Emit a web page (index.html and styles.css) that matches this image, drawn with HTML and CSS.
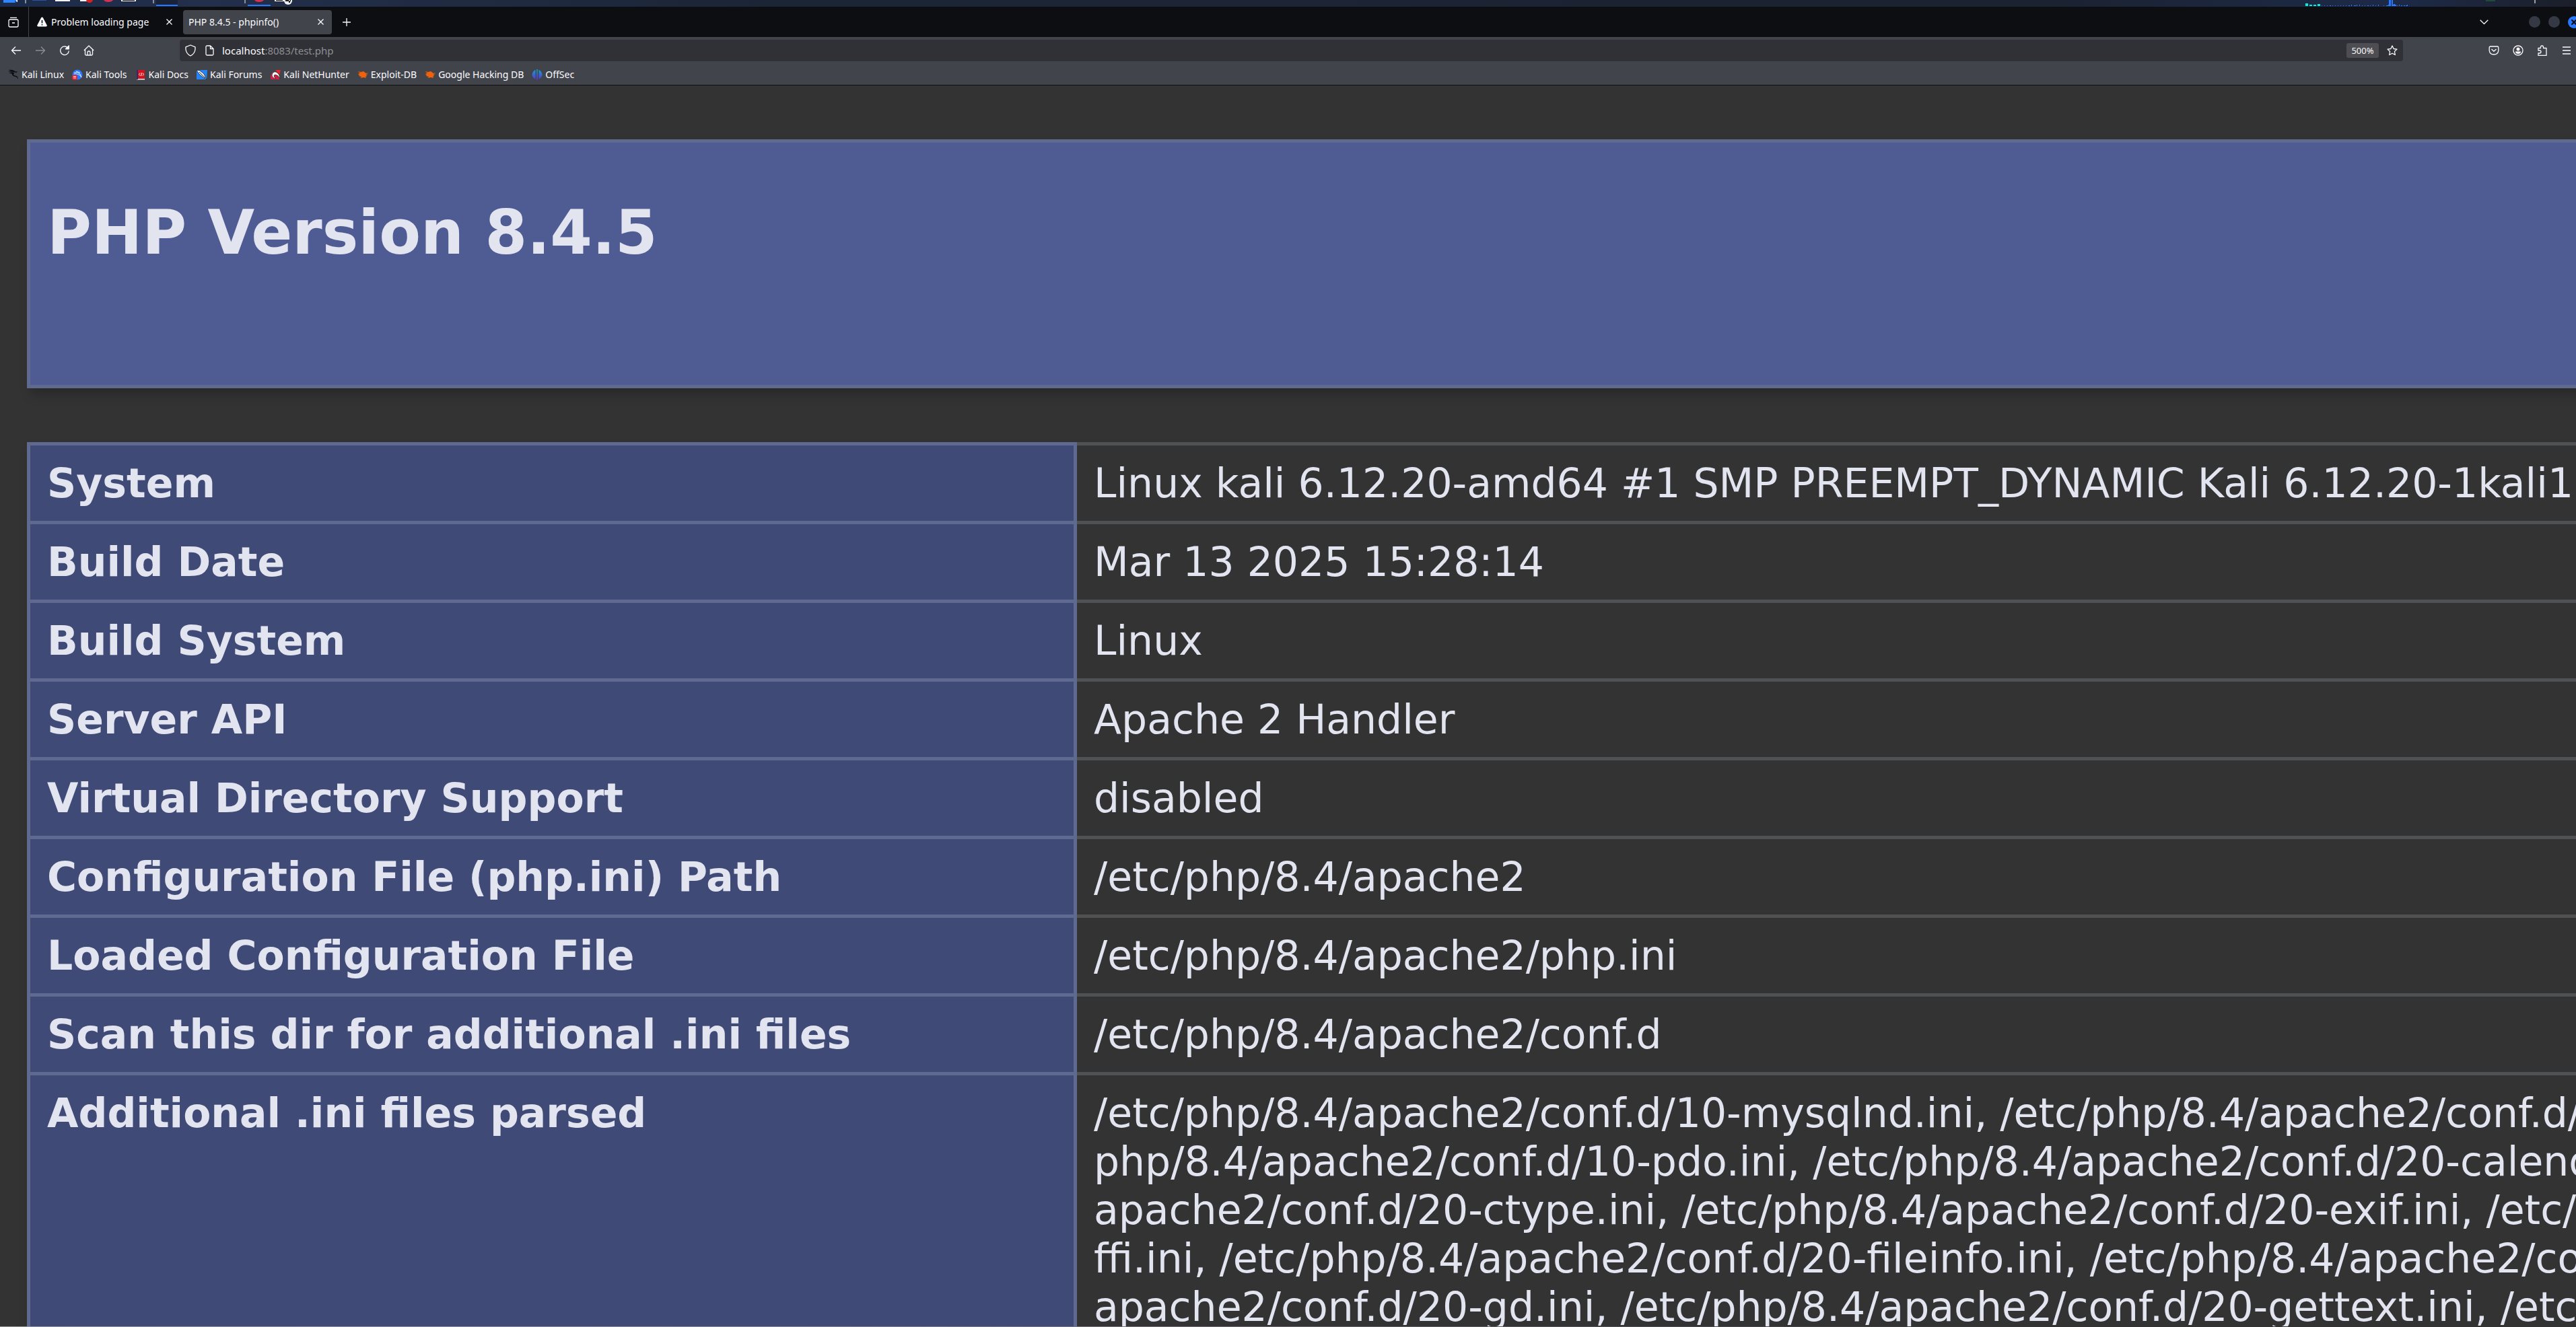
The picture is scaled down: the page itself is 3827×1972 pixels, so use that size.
FILE: index.html
```html
<!DOCTYPE html>
<html lang="en">
<head>
<meta charset="utf-8">
<title>PHP 8.4.5 - phpinfo()</title>
<link rel="stylesheet" href="styles.css">
</head>
<body>
<div class="panel" aria-hidden="true">
  <svg width="440" height="10" viewBox="0 0 440 10">
    <path d="M5 0h20v3l-3-2 1 3H5z" fill="#2f86ff"/>
    <path d="M24 0h2v3h-1z" fill="#fff"/>
    <path d="M37 0h2v5h-2zM227 0h2v5h-2zM363 0h2v5h-2z" fill="#8b8f98"/>
    <path d="M48 0h21v1H48z" fill="#2f4fa5"/>
    <path d="M82 0h22v2H82z" fill="#f2f2f2"/>
    <path d="M119 0h14v2h-14z" fill="#f2f2f2"/>
    <path d="M128 0h10q-1 4-5 4t-5-4z" fill="#d92020"/>
    <path d="M154 0h14q-2 3-7 3t-7-3zM378 0h14q-2 3-7 3t-7-3z" fill="#d9304f"/>
    <path d="M180 0h22v2h-22zM408 0h14v2h-14z" fill="#f4f4f4"/>
    <path d="M182 0h18v1h-18zM410 0h10v1h-10z" fill="#111"/>
    <path d="M232 0h32v7h-32z" fill="#1b2338"/>
    <path d="M232 7h32v2h-32zM368 7h34v2h-34z" fill="#2777ff"/>
    <circle cx="428" cy="1" r="6" fill="#eee"/>
    <path d="M424 0v2h5v2h2V2h1V0h-1v1h-2V0z" fill="#222"/>
  </svg>
  <svg width="402" height="10" viewBox="0 0 402 10">
    <path d="M0 5h4v4H0zM6 7h4v2H6zM12 7h4v2h-4zM18 6h4v3h-4z" fill="#00f0d8"/>
    <path d="M24 8h1v1h-1zM28 8h1v1h-1zM32 8h1v1h-1zM36 8h2v1h-2zM40 8h1v1h-1zM44 8h1v1h-1zM48 8h1v1h-1zM52 8h1v1h-1zM56 8h1v1h-1zM60 8h1v1h-1zM64 8h2v1h-2zM68 7h1v2h-1zM72 8h3v1h-3zM76 7h1v2h-1zM80 7h1v2h-1zM84 8h1v1h-1zM88 8h1v1h-1zM92 8h2v1h-2zM96 8h1v1h-1zM100 7h1v2h-1zM104 8h1v1h-1zM108 7h1v2h-1zM116 8h1v1h-1zM120 8h3V7h1V0h3v9h-7zM128 0h2v7h1V6h2v1h2v2h-7zM136 8h1v1h-1zM139 7h1v2h-1zM142 8h2v1h-2zM146 8h2v1h-2zM149 8h2V7h1v2h-3z" fill="#2777ff"/>
    <path d="M268 0h14v2h-14z" fill="#1f4a3c"/>
    <path d="M340 0h2v5h-2z" fill="#9a9da5"/>
  </svg>
</div>

<header class="browser">
  <div class="tabbar">
    <button class="icon-btn recent" aria-label="Firefox View">
      <svg width="16" height="16" viewBox="0 0 16 16" class="line"><path d="M3 1.3h10M1 7V6q0-2 2-2h10q2 0 2 2v1M1 7v6q0 2 2 2h10q2 0 2-2V6M6 9h4"/></svg>
    </button>
    <div class="tab">
      <svg width="15" height="15" viewBox="0 0 15 15"><path d="M7.500.500q1 0 1.500 1l5.600 10.700q.800 2-1.200 2.300H1.600q-2-.300-1.200-2.300L6 1.500q.500-1 1.500-1z" fill="#fbfbfe"/><path d="M7.500 5v4.500M7.500 11v1.500" stroke="#111" stroke-width="1.600"/></svg>
      <span class="tab-label">Problem loading page</span>
      <button class="icon-btn" aria-label="Close tab"><svg width="9" height="9" viewBox="0 0 9 9" class="line"><path d="M.5.5l8 8M8.500.500l-8 8"/></svg></button>
    </div>
    <div class="tab active">
      <span class="tab-label">PHP 8.4.5 - phpinfo()</span>
      <button class="icon-btn" aria-label="Close tab"><svg width="9" height="9" viewBox="0 0 9 9" class="line"><path d="M.5.5l8 8M8.500.500l-8 8"/></svg></button>
    </div>
    <button class="icon-btn new-tab" aria-label="New tab"><svg width="12" height="12" viewBox="0 0 12 12" class="line"><path d="M6 0v12M0 6h12"/></svg></button>
    <div class="window-controls">
      <button class="icon-btn all-tabs" aria-label="List all tabs"><svg width="13" height="8" viewBox="0 0 13 8" class="line"><path d="M.7.8l5.800 5.700L12.300.800"/></svg></button>
      <button class="dot" aria-label="Minimize"></button>
      <button class="dot" aria-label="Restore"></button>
      <button class="dot close" aria-label="Close"><svg width="8" height="8" viewBox="0 0 8 8"><path d="M1 1l6 6M7 1L1 7" stroke="#0c0e12" stroke-width="2.200" stroke-linecap="square"/></svg></button>
    </div>
  </div>

  <div class="navbar">
    <nav class="nav-buttons" aria-label="Navigation">
      <button class="icon-btn" aria-label="Back"><svg width="16" height="16" viewBox="0 0 16 16" class="line"><path d="M15 8H1.500M7 2.500L1.500 8 7 13.500"/></svg></button>
      <button class="icon-btn" aria-label="Forward" disabled><svg width="16" height="16" viewBox="0 0 16 16" class="line"><path d="M1 8h13.500M9 2.500L14.500 8 9 13.500"/></svg></button>
      <button class="icon-btn" aria-label="Reload"><svg width="16" height="16" viewBox="0 0 16 16" class="line"><path d="M13.500 5.200A6.300 6.300 0 1 0 14.300 8.500M14.300 1v4.800H9.500z"/><path d="M14.500 1v5h-5z" fill="#fbfbfe" stroke="none"/></svg></button>
      <button class="icon-btn" aria-label="Home"><svg width="16" height="16" viewBox="0 0 16 16" class="line"><path d="M.8 8L8 1l7.200 7M2.500 7v6.500q0 1.500 1.500 1.500h8q1.500 0 1.500-1.500V7M6 15v-4q0-2 2-2t2 2v4"/></svg></button>
    </nav>
    <div class="urlbar">
      <svg width="16" height="18" viewBox="0 0 16 18" class="line"><path d="M8 1L15 3.800v3.400Q14.500 13.500 8 17 1.500 13.500 1 7.200V3.800z"/></svg>
      <svg width="13" height="16" viewBox="0 0 13 16" class="line"><path d="M7.500 1H2.500Q1 1 1 2.500v11Q1 15 2.500 15h8q1.500 0 1.500-1.500v-8zM7.500 1v4.500H12"/></svg>
      <a class="url" href="#"><span class="host">localhost</span>:8083/test.php</a>
      <button class="zoom-level">500%</button>
      <button class="icon-btn" aria-label="Bookmark this page"><svg width="16" height="16" viewBox="0 0 16 16" class="line"><path d="M8 1l2.100 4.500 4.900.600-3.600 3.400.900 5L8 12.200l-4.300 2.300.900-5L1 6.100l4.900-.600z"/></svg></button>
    </div>
    <div class="tools">
      <button class="icon-btn" aria-label="Pocket"><svg width="16" height="16" viewBox="0 0 16 16" class="line"><path d="M3 2h10q1.800 0 1.800 1.800V8q-.5 6-6.800 6T1.200 8V3.800Q1.200 2 3 2zM4.500 6L8 9.300 11.500 6"/></svg></button>
      <button class="icon-btn" aria-label="Account"><svg width="16" height="16" viewBox="0 0 16 16" class="line"><circle cx="8" cy="8" r="7"/><circle cx="8" cy="6" r="2.500" fill="#fbfbfe" stroke="none"/><path d="M4 9.500h8q0 3.500-4 3.500t-4-3.500z" fill="#fbfbfe" stroke="none"/></svg></button>
      <button class="icon-btn" aria-label="Extensions"><svg width="16" height="16" viewBox="0 0 16 16" class="line"><path d="M5.500 4.500V3q0-2 2-2t2 2v1.500H14v11H2V12h2q2 0 2-2T4 8H2V4.500z"/></svg></button>
      <button class="icon-btn" aria-label="Menu"><svg width="16" height="16" viewBox="0 0 16 16" class="line"><path d="M2 3h12M2 8h12M2 13h12"/></svg></button>
    </div>
  </div>

  <nav class="bookmarks" aria-label="Bookmarks">
    <a href="#"><svg width="16" height="16" viewBox="0 0 16 16"><path d="M0 1q5-1 9 1l4 3-4-1Q4 3 0 4l4-2zM1 6q4-3 8-1 1 1-1 2 0 2 3 2.500 4 .500 4 6-1-4-4-4.500-5-1-5-4Q3 5 1 6zM9 4l5-1-2 2z" fill="#0b0c0f"/></svg>Kali Linux</a>
    <a href="#"><svg width="16" height="16" viewBox="0 0 16 16"><circle cx="8" cy="8" r="7.500" fill="#2777ff"/><path d="M3 5q5-2 9 2l2 5q-2-4-5-4.500Q6 6 3 7M6 3l6 2" stroke="#d9e8ff" fill="none"/><circle cx="4" cy="12" r="4" fill="#e8242c"/><path d="M2 10.500h4M3 11v3M5 11v3" stroke="#fff" stroke-width=".8"/></svg>Kali Tools</a>
    <a href="#"><svg width="16" height="16" viewBox="0 0 16 16"><path d="M2 1h12v13H2z" fill="#d8101c"/><path d="M2 14h12v1.500H2z" fill="#eee"/><path d="M2 1h2v14H2z" fill="#302a6b"/><path d="M7 5.500L5.500 7.500 7 9.500M11 5.500l1.500 2L11 9.500M9.500 5l-1 5" stroke="#fff" fill="none"/></svg>Kali Docs</a>
    <a href="#"><svg width="16" height="16" viewBox="0 0 16 16"><path d="M0 1h16l-1 14H0z" fill="#2484f5"/><path d="M0 1l5 1 6 5 4 8-5-3-6-5z" fill="#fff" stroke="#17243a" stroke-width=".8"/><path d="M4 4l9 9" stroke="#17243a"/></svg>Kali Forums</a>
    <a href="#"><svg width="16" height="16" viewBox="0 0 16 16"><path d="M8 1h8l-2 7z" fill="#e8242c"/><path d="M1 15Q0 7 5 4l10 9-1 2z" fill="#d21e45"/><path d="M3 9Q4 3 9 4q5 2 6 10-3-6-7-6-2 0-2 2t3 3q-5 1-6-4z" fill="#fff" stroke="#111" stroke-width=".6"/></svg>Kali NetHunter</a>
    <a href="#"><svg width="16" height="16" viewBox="0 0 16 16"><path d="M1 3l4 1 4-1 4 3 3 1-3 1 1 2-2 1 1 2-4-1-4 1 1-2-4-1 1-1-2-2 2-1z" fill="#f0610e"/><path d="M1 4l3 1M4 13l2-2M13 6l3-1" stroke="#8b4a2b"/></svg>Exploit-DB</a>
    <a href="#"><svg width="16" height="16" viewBox="0 0 16 16"><path d="M1 3l4 1 4-1 4 3 3 1-3 1 1 2-2 1 1 2-4-1-4 1 1-2-4-1 1-1-2-2 2-1z" fill="#f0610e"/><path d="M1 4l3 1M4 13l2-2M13 6l3-1" stroke="#8b4a2b"/></svg>Google Hacking DB</a>
    <a href="#"><svg width="16" height="16" viewBox="0 0 16 16"><defs><linearGradient id="os" x2="0" y2="1"><stop stop-color="#12a5c4"/><stop offset="1" stop-color="#5a2fe0"/></linearGradient></defs><path d="M5.500.800v14Q1 12.500.500 8 1 3 5.500.800zM10.500.800v14q4.500-2.300 5-6.800-.500-5-5-7.200zM7.200 0h1.600v16H7.200z" fill="url(#os)"/></svg>OffSec</a>
  </nav>
</header>

<main class="page">
  <div class="banner"><h1>PHP Version 8.4.5</h1></div>
  <table class="info">
    <tbody>
      <tr><th scope="row">System</th><td>Linux kali 6.12.20-amd64 #1 SMP PREEMPT_DYNAMIC Kali 6.12.20-1kali1</td></tr>
      <tr><th scope="row">Build Date</th><td>Mar 13 2025 15:28:14</td></tr>
      <tr><th scope="row">Build System</th><td>Linux</td></tr>
      <tr><th scope="row">Server API</th><td>Apache 2 Handler</td></tr>
      <tr><th scope="row">Virtual Directory Support</th><td>disabled</td></tr>
      <tr><th scope="row">Configuration File (php.ini) Path</th><td>/etc/php/8.4/apache2</td></tr>
      <tr><th scope="row">Loaded Configuration File</th><td>/etc/php/8.4/apache2/php.ini</td></tr>
      <tr><th scope="row">Scan this dir for additional .ini files</th><td>/etc/php/8.4/apache2/conf.d</td></tr>
      <tr><th scope="row">Additional .ini files parsed</th><td>/etc/php/8.4/apache2/conf.d/10-mysqlnd.ini, /etc/php/8.4/apache2/conf.d/<br>php/8.4/apache2/conf.d/10-pdo.ini, /etc/php/8.4/apache2/conf.d/20-calend<br>apache2/conf.d/20-ctype.ini, /etc/php/8.4/apache2/conf.d/20-exif.ini, /etc/<br>ffi.ini, /etc/php/8.4/apache2/conf.d/20-fileinfo.ini, /etc/php/8.4/apache2/co<br>apache2/conf.d/20-gd.ini, /etc/php/8.4/apache2/conf.d/20-gettext.ini, /etc</td></tr>
    </tbody>
  </table>
</main>
<div class="window-edge"></div>
</body>
</html>
```
FILE: styles.css
```css
* { box-sizing: border-box; }

body {
  margin: 0;
  height: 100vh;
  display: flex;
  flex-direction: column;
  overflow: hidden;
  background: #333;
  color: #e2e4f0;
  font-family: "DejaVu Sans", sans-serif;
}

svg { display: block; flex: none; }
.line { fill: none; stroke: #fbfbfe; stroke-width: 1.3; stroke-linejoin: round; }

button {
  border: 0;
  padding: 0;
  background: none;
  color: inherit;
  font: inherit;
}
button:disabled { opacity: 0.4; }
.icon-btn { display: flex; align-items: center; justify-content: center; flex: none; }

/* Desktop panel above the window */
.panel {
  flex: none;
  height: 10px;
  display: flex;
  justify-content: space-between;
  padding-right: 0;
  background: linear-gradient(90deg, #1c2b4a, #232f4b 8%, #1c2536 30%, #1b2232 80%, #1d2a48 93%, #1c1f2a);
}

/* Browser chrome */
.browser {
  flex: none;
  background: #42444c;
  border-bottom: 1px solid #0e0f13;
  color: #fbfbfe;
  font: 14px/20px "Noto Sans", sans-serif;
}

.tabbar {
  height: 45px;
  display: flex;
  align-items: center;
  overflow: hidden;
  background: #0c0e12;
}
.recent {
  align-self: stretch;
  width: 43px;
  padding-right: 2px;
  border-right: 1px solid #42444c;
}
.tab {
  width: 221px;
  height: 36px;
  display: flex;
  align-items: center;
  gap: 6px;
  padding: 0 12px 0 8px;
  border-radius: 4px;
}
.tab:first-of-type { margin: 0 4px; }
.tab.active { background: #42444c; }
.tab-label { flex: 1; white-space: nowrap; }
.new-tab { margin-left: 16px; }
.window-controls {
  margin-left: auto;
  margin-right: -6px;
  display: flex;
  align-items: center;
  gap: 12px;
}
.all-tabs { margin-right: 48px; }
.dot { width: 17px; height: 17px; border-radius: 50%; background: #353945; flex: none; }
.dot.close {
  width: 18px;
  height: 18px;
  display: flex;
  align-items: center;
  justify-content: center;
  background: #2777ff;
}

.navbar {
  height: 40px;
  display: flex;
  align-items: center;
  justify-content: space-between;
  padding: 0 6px 0 16px;
}
.nav-buttons { display: flex; gap: 20px; }
.urlbar {
  flex: 1;
  height: 32px;
  margin: 0 127px;
  display: flex;
  align-items: center;
  gap: 12px;
  padding: 0 8px;
  border-radius: 4px;
  background: #303136;
}
.url { flex: 1; font-size: 15px; color: #8d8e93; text-decoration: none; }
.urlbar > :nth-child(2) { margin-left: 2px; }
.host { color: #fbfbfe; }
.zoom-level {
  width: 48px;
  height: 22px;
  border-radius: 3px;
  background: #4d4d52;
  font-size: 13px;
}
.tools { display: flex; gap: 20px; }

.bookmarks {
  height: 31px;
  display: flex;
  align-items: center;
  gap: 12px;
  padding: 0 12px;
}
.bookmarks a {
  display: flex;
  align-items: center;
  gap: 4px;
  color: inherit;
  text-decoration: none;
  white-space: nowrap;
}

/* phpinfo() output */
.page {
  flex: 1;
  min-height: 0;
  overflow: hidden;
  padding: 80px 0 0 40px;
}
.banner {
  width: 125%;
  min-height: 370px;
  padding: 20px 25px;
  border: 5px solid #606a90;
  background: #4f5b93;
  box-shadow: 5px 10px 15px rgba(0, 0, 0, 0.2);
}
.banner h1 { margin: 60px 0; font-size: 90px; line-height: 108px; }

.info {
  width: 125%;
  margin-top: 80px;
  table-layout: fixed;
  border-collapse: collapse;
  box-shadow: 5px 10px 15px rgba(0, 0, 0, 0.2);
  font-size: 60px;
  line-height: 72px;
}
.info th,
.info td {
  box-sizing: content-box;
  padding: 20px 25px;
  border: 5px solid #505152;
  text-align: left;
  vertical-align: top;
  white-space: nowrap;
}
.info th {
  width: 1500px;
  border-color: #606a90;
  background: #404a77;
}

.window-edge {
  flex: none;
  height: 1px;
  background: linear-gradient(90deg, #999, #8d8a92 30%, #333 80%);
}
```
